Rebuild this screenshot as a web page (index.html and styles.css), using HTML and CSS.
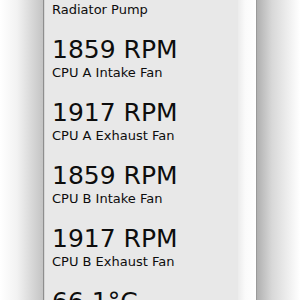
FILE: index.html
```html
<!DOCTYPE html>
<html lang="en">
<head>
    <meta charset="UTF-8">
    <title>Fan Readings</title>
    <link rel="stylesheet" href="styles.css">
</head>
<body>
    <div class="desktop">
        <div class="shade-left"></div>
        <aside class="drawer">
            <ul class="readings">
                <li class="reading">
                    <span class="reading-label">Radiator Pump</span>
                </li>
                <li class="reading">
                    <span class="reading-value">1859 RPM</span>
                    <span class="reading-label">CPU A Intake Fan</span>
                </li>
                <li class="reading">
                    <span class="reading-value">1917 RPM</span>
                    <span class="reading-label">CPU A Exhaust Fan</span>
                </li>
                <li class="reading">
                    <span class="reading-value">1859 RPM</span>
                    <span class="reading-label">CPU B Intake Fan</span>
                </li>
                <li class="reading">
                    <span class="reading-value">1917 RPM</span>
                    <span class="reading-label">CPU B Exhaust Fan</span>
                </li>
                <li class="reading">
                    <span class="reading-value">66.1°C</span>
                </li>
            </ul>
        </aside>
        <div class="drawer-lip"></div>
        <div class="window-edge"></div>
    </div>
</body>
</html>
```

FILE: styles.css
```css
:root {
    --panel-color: #e8e8e8;
    --text-color: #0d0d0d;
}

body {
    margin: 0;
    font-family: 'DejaVu Sans', sans-serif;
    color: var(--text-color);
    background: #fff;
}

.desktop {
    display: flex;
    height: 300px;
    overflow: hidden;
}

.shade-left {
    width: 43px;
    background: linear-gradient(to right, #fff 0%, #f2f2f2 40%, #c4c4c4 100%);
}

.drawer {
    width: 194px;
    background: var(--panel-color);
    border-left: 1px solid #8e8e8e;
    box-shadow: inset 1px 0 0 #d6d6d6;
}

.readings {
    list-style: none;
    margin: 0;
    padding: 2px 0 0 8px;
}

.reading {
    display: flex;
    flex-direction: column;
    margin-bottom: 16px;
}

.reading-value {
    font-size: 25px;
    line-height: 32px;
}

.reading-label {
    font-size: 13px;
    line-height: 16px;
    margin-top: -1px;
}

.reading:first-child .reading-label {
    margin-top: 0;
}

.drawer-lip {
    width: 18px;
    background: linear-gradient(to right, #ececec, #fafafa 40%, #fff);
}

.window-edge {
    flex: 1;
    border-left: 1px solid #9a9a9a;
    background: linear-gradient(to right, #b0b0b0 0%, #d8d8d8 35%, #fff 100%);
}
```
